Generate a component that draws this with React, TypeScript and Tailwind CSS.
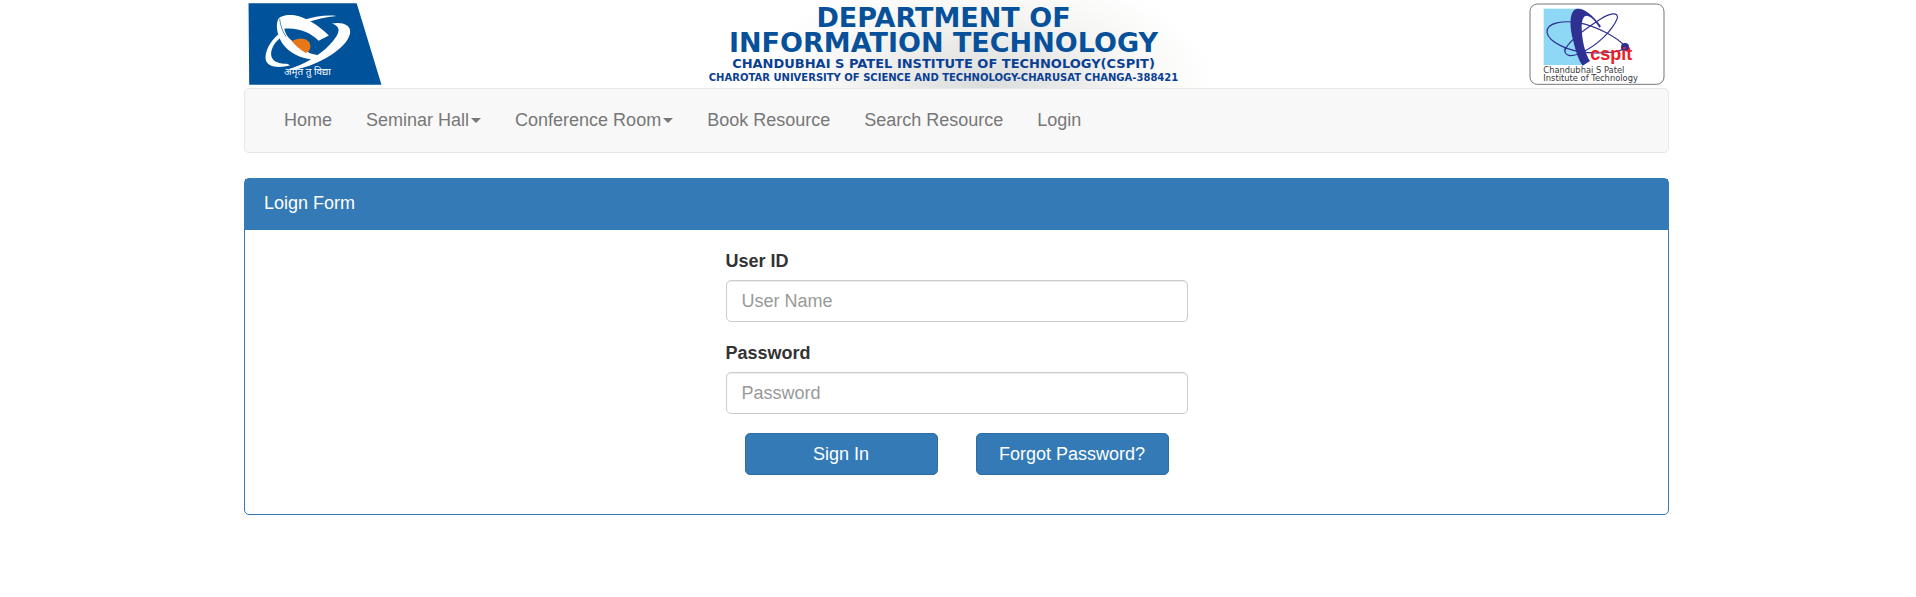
import React from "react";

function UniversityLogo() {
  return (
    <svg viewBox="24 6 402 248" className="h-[82px] w-[134px]" role="img" aria-label="University emblem">
      <path d="M24 7H351L426 253H26Z" fill="#00529b" />
      <path
        fill="#fff"
        d="M113 56C120 44 140 40 163 43C200 50 236 74 267 104L236 120C214 98 176 80 132 84C136 102 145 112 157 122C172 138 192 150 212 159L251 168C258 173 246 177 232 177C196 178 160 164 138 142C116 120 103 82 113 56Z"
      />
      <path d="M155 121C172 112 190 110 203 120C213 128 214 142 205 153L197 157C182 148 166 136 155 121Z" fill="#e77817" />
      <path d="M118 54C121 76 127 94 138 108" fill="none" stroke="#00529b" strokeWidth="2" />
      <path
        fill="#fff"
        d="M290 45C258 48 226 56 198 66L184 59C222 46 262 41 290 45ZM113 101L120 111C98 130 88 152 94 170C99 184 118 190 140 190L150 194C118 203 82 202 76 178C72 154 88 124 113 101Z"
      />
      <path
        fill="#fff"
        d="M276 68C304 62 336 70 331 98C322 140 250 186 180 204C166 208 152 209 142 207C190 194 240 164 268 134C294 106 312 80 276 68Z"
      />
      <text x="202" y="225" textAnchor="middle" fill="#fff" fontSize="30" fontFamily="'Noto Sans Devanagari', 'Noto Sans', sans-serif">
        अमृतं तु विद्या
      </text>
    </svg>
  );
}

function InstituteLogo() {
  return (
    <svg viewBox="26 8 406 246" className="h-[82px] w-[136px]" role="img" aria-label="Chandubhai S Patel Institute of Technology">
      <rect x="28" y="11" width="402" height="241" rx="22" fill="#fff" stroke="#77777b" strokeWidth="3" />
      <rect x="69" y="25" width="114" height="169" fill="#8ed8f5" />
      <g fill="none" stroke="#2e3192" strokeWidth="3.5">
        <path d="M312 137C290 112 230 78 172 67C130 60 76 66 79 96C84 126 146 154 202 157C250 160 306 156 312 140" />
        <path d="M133 142C128 170 152 170 180 158C230 136 276 90 290 54C294 34 268 38 240 56C190 88 142 122 133 150" />
      </g>
      <path
        fill="#2e3192"
        d="M241 78C216 42 190 24 170 25C146 28 146 74 156 114C164 150 174 182 186 196L208 182C192 158 184 116 183 86C182 60 188 46 198 46C212 48 226 64 236 82Z"
      />
      <circle cx="313" cy="140" r="12" fill="#2e3192" />
      <text x="209" y="180" fill="#ed1c24" fontSize="54" fontWeight="700" fontFamily="'Liberation Sans', Arial, sans-serif">
        cspit
      </text>
      <g fill="#3a3a3c" fontSize="25" fontFamily="'DejaVu Sans', Verdana, sans-serif">
        <text x="68" y="218">Chandubhai S Patel</text>
        <text x="68" y="241">Institute of Technology</text>
      </g>
    </svg>
  );
}

function Banner() {
  return (
    <header className="flex h-[88px] items-center justify-between bg-[radial-gradient(ellipse_230px_120px_at_52%_100%,#dadddd,#e9eae8_35%,#f6f6f4_65%,#ffffff)] px-1">
      <UniversityLogo />
      <div className="pt-px pr-6 text-center font-['DejaVu_Sans',Verdana,sans-serif] font-bold whitespace-nowrap text-[#07509a]">
        <h1 className="text-[27px] leading-[25px]">
          DEPARTMENT OF
          <br />
          INFORMATION TECHNOLOGY
        </h1>
        <p className="text-[13px] leading-[17px] text-[#0b3f93]">CHANDUBHAI S PATEL INSTITUTE OF TECHNOLOGY(CSPIT)</p>
        <p className="text-[10px] leading-[12px] text-[#0b3f93]">
          CHAROTAR UNIVERSITY OF SCIENCE AND TECHNOLOGY-CHARUSAT CHANGA-388421
        </p>
      </div>
      <InstituteLogo />
    </header>
  );
}

const links = [
  { label: "Home", menu: false },
  { label: "Seminar Hall", menu: true },
  { label: "Conference Room", menu: true },
  { label: "Book Resource", menu: false },
  { label: "Search Resource", menu: false },
  { label: "Login", menu: false },
];

function NavBar() {
  return (
    <nav className="rounded-[5px] border border-[#e7e7e7] bg-[#f8f8f8] px-[22px]">
      <ul className="flex h-[63px] flex-wrap">
        {links.map((link) => (
          <li key={link.label}>
            <a href="#" className="flex items-center px-[17px] py-[19px] text-[#777777] hover:text-[#333333]">
              {link.label}
              {link.menu && (
                <span className="ml-[2px] border-x-[5px] border-t-[5px] border-x-transparent border-t-[#777777]" />
              )}
            </a>
          </li>
        ))}
      </ul>
    </nav>
  );
}

function Field({ id, label, type, placeholder }: { id: string; label: string; type: string; placeholder: string }) {
  return (
    <div className="mb-[19px]">
      <label htmlFor={id} className="mb-[6px] block font-bold text-[#333333]">
        {label}
      </label>
      <input
        id={id}
        type={type}
        placeholder={placeholder}
        className="block h-[42px] w-full rounded-[5px] border border-[#cccccc] bg-white px-[15px] text-[#555555] shadow-[inset_0_1px_1px_rgba(0,0,0,0.075)] placeholder:text-[#999999]"
      />
    </div>
  );
}

const buttonClass =
  "h-[42px] rounded-[5px] border border-[#2e6da4] bg-[#337ab7] text-white hover:bg-[#286090]";

export default function App() {
  return (
    <div className="bg-white pr-[3px] font-['Liberation_Sans',Arial,sans-serif] text-[18px] leading-[25px]">
      <main className="mx-auto max-w-[1425px]">
        <Banner />
        <NavBar />
        <section className="mt-[25px] rounded-[5px] border border-[#337ab7]">
          <h2 className="bg-[#337ab7] px-[19px] pt-[12px] pb-[14px] text-white">Loign Form</h2>
          <form
            className="mx-auto w-full px-5 pt-[19px] pb-[39px] md:w-1/3 md:max-w-[462px] md:px-0"
            onSubmit={(e) => e.preventDefault()}
          >
            <Field id="user" label="User ID" type="text" placeholder="User Name" />
            <Field id="password" label="Password" type="password" placeholder="Password" />
            <div className="grid grid-cols-2 gap-[38px] px-[19px]">
              <button type="submit" className={buttonClass}>
                Sign In
              </button>
              <button type="button" className={buttonClass}>
                Forgot Password?
              </button>
            </div>
          </form>
        </section>
      </main>
    </div>
  );
}
